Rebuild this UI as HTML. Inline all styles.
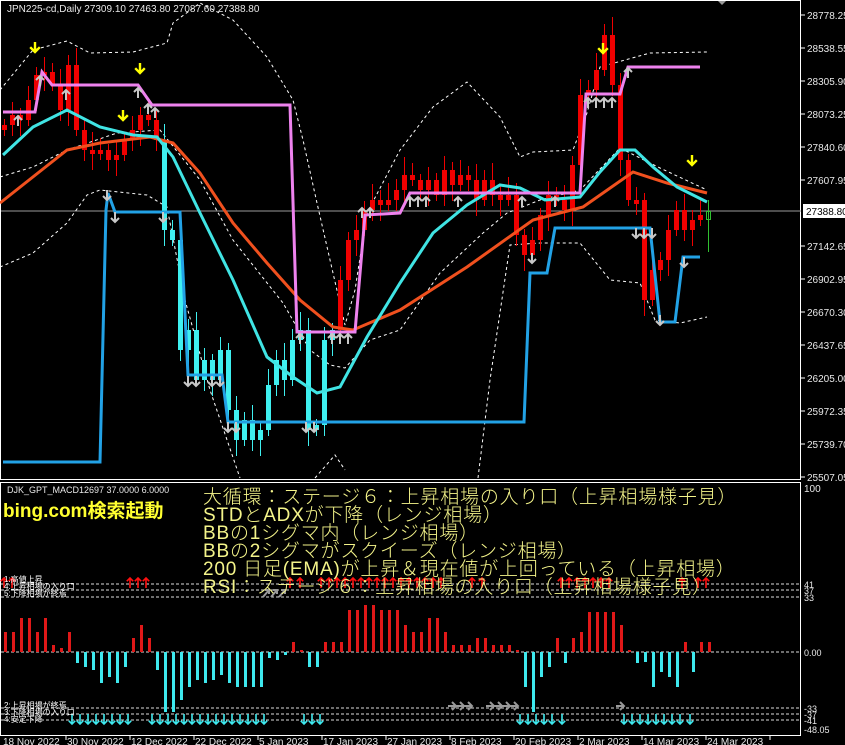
<!DOCTYPE html>
<html><head><meta charset="utf-8">
<style>
html,body{margin:0;padding:0;background:#000;width:845px;height:745px;overflow:hidden}
svg{position:absolute;left:0;top:0}
.t{font-family:"Liberation Sans",sans-serif;fill:#e8e8e8;font-size:10px}
#yt{position:absolute;left:203px;top:489px;color:#f4f48a;font-family:"Liberation Sans","Noto Sans CJK JP",sans-serif;font-size:19px;line-height:18px;letter-spacing:0.8px;white-space:pre;font-weight:300}
#bing{position:absolute;left:3px;top:496px;color:#ffff30;font-family:"Liberation Sans","Noto Sans CJK JP",sans-serif;font-size:19px;font-weight:bold}
</style></head><body>
<svg id="s" width="845" height="745" xmlns="http://www.w3.org/2000/svg"></svg>
<div id="yt">大循環：ステージ６：上昇相場の入り口（上昇相場様子見）
STDとADXが下降（レンジ相場）
BBの1シグマ内（レンジ相場）
BBの2シグマがスクイーズ（レンジ相場）
200 日足(EMA)が上昇＆現在値が上回っている（上昇相場）
RSI：ステージ６：上昇相場の入り口（上昇相場様子見）</div>
<div id="bing">bing.com検索起動</div>
<script>
(function(){
var s=document.getElementById('s'),h='';
function pl(pts,c,w,d){h+='<polyline fill="none" stroke="'+c+'" stroke-width="'+w+'"'+(d?' stroke-dasharray="'+d+'"':'')+' points="'+pts.map(function(p){return p.join(',')}).join(' ')+'"/>';}
function tx(x,y,t,c,sz,a){h+='<text class="t" x="'+x+'" y="'+y+'"'+(c?' style="fill:'+c+(sz?';font-size:'+sz+'px':'')+'"':'')+(a?' text-anchor="'+a+'"':'')+'>'+t+'</text>';}
h+='<rect x="0.5" y="0.5" width="800" height="479" fill="none" stroke="#fff"/>';
h+='<rect x="0.5" y="482.5" width="800" height="253" fill="none" stroke="#fff"/>';
var pv=['28778.25','28538.55','28305.90','28073.25','27840.60','27607.95','','27142.65','26902.95','26670.30','26437.65','26205.00','25972.35','25739.70','25507.05'];
for(var i=0;i<pv.length;i++){var y=15+i*33;if(pv[i]){h+='<line x1="801" x2="805" y1="'+y+'" y2="'+y+'" stroke="#fff"/>';tx(807,y+4,pv[i],'#e8e8e8',10);}}
h+='<line x1="1" x2="801" y1="211" y2="211" stroke="#9a9a9a"/>';
h+='<rect x="803" y="204" width="42" height="14" fill="#fff"/>';tx(806,215,'27388.80','#000',10);
pl([[0,90],[33,50],[67,41],[90,53],[133,52],[167,43],[173,23],[200,3],[233,20],[267,57],[293,100],[303,140],[317,203],[333,273],[345,325],[355,290],[367,213],[400,150],[433,107],[467,82],[500,117],[520,157],[533,152],[573,150],[587,113],[600,67],[650,53],[707,52]],'#fff',1,'3,3');
pl([[0,267],[33,253],[67,223],[87,195],[100,190],[147,195],[167,207],[185,300],[210,390],[240,478]],'#fff',1,'3,3');
pl([[315,478],[335,455],[345,470]],'#fff',1,'3,3');
pl([[478,478],[490,380],[510,245],[540,243],[580,243],[610,280],[640,283],[655,320],[680,323],[707,317]],'#fff',1,'3,3');
pl([[0,177],[33,167],[67,150],[117,133],[160,130],[200,180],[233,240],[283,303],[310,350],[330,365],[345,368],[370,340],[400,330],[440,273],[483,233],[507,213],[540,200],[580,190],[620,148],[660,168],[707,190]],'#fff',1,'3,3');
var C=[125,115,120,100,75,72,85,110,65,130,150,150,150,160,155,140,130,115,120,140,230,240,350,330,380,360,380,350,410,440,420,440,430,385,360,380,340,330,430,425,340,330,280,240,230,210,200,205,200,190,175,180,190,180,195,170,185,175,180,200,180,195,200,195,235,255,240,215,195,200,210,165,95,90,70,35,85,160,200,200,300,270,260,230,210,230,220,215];
var O=130;
for(var i=0;i<C.length;i++){var x=4+8*i,c=C[i],o=O;
 if(Math.abs(c-o)<3)o=c+4;
 var tp=Math.min(o,c),bt=Math.max(o,c);
 var col=(i>=20&&i<=41)?'#3ff0f0':'#f00000';
 var hi=tp-6-(i*7%13),lo=bt+6+(i*5%15);
 h+='<line x1="'+(x+0.5)+'" x2="'+(x+0.5)+'" y1="'+hi+'" y2="'+lo+'" stroke="'+col+'"/>';
 h+='<rect x="'+(x-2)+'" y="'+tp+'" width="5" height="'+(bt-tp)+'" fill="'+col+'"/>';
 O=c;}
var gx=708;h+='<line x1="'+(gx+0.5)+'" x2="'+(gx+0.5)+'" y1="200" y2="252" stroke="#30c030"/><rect x="'+(gx-2)+'.5" y="211.5" width="4" height="8" fill="none" stroke="#30c030"/>';
pl([[0,203],[67,150],[100,143],[150,137],[173,143],[200,173],[233,223],[267,263],[300,300],[333,327],[353,330],[400,310],[467,267],[533,220],[583,207],[633,172],[667,183],[707,193]],'#f0501e',3);
pl([[3,155],[33,127],[67,110],[100,127],[133,135],[157,137],[173,157],[200,213],[233,280],[267,357],[293,377],[317,393],[340,387],[367,337],[400,283],[433,233],[467,205],[500,185],[520,188],[545,200],[580,197],[600,172],[620,150],[635,150],[653,167],[677,187],[707,202]],'#40e4e4',3);
pl([[3,112],[35,112],[42,72],[52,85],[138,85],[152,105],[290,105],[297,332],[355,332],[365,215],[400,213],[410,193],[580,193],[586,94],[620,94],[628,67],[700,67]],'#ee82ee',3);
pl([[3,462],[100,462],[106,210],[108,193],[115,212],[180,212],[188,375],[222,375],[228,422],[524,422],[530,273],[547,273],[555,228],[650,228],[660,322],[675,322],[683,257],[700,257]],'#22a2e6',3);
function up(x,y,c,w){w=w||1;h+='<path d="M'+x+' '+(y+10)+'V'+y+'M'+(x-4*w)+' '+(y+4*w)+'L'+x+' '+y+'L'+(x+4*w)+' '+(y+4*w)+'" stroke="'+c+'" stroke-width="'+(2*w)+'" fill="none"/>';}
function dn(x,y,c,w){w=w||1;h+='<path d="M'+x+' '+(y-10)+'V'+y+'M'+(x-4*w)+' '+(y-4*w)+'L'+x+' '+y+'L'+(x+4*w)+' '+(y-4*w)+'" stroke="'+c+'" stroke-width="'+(2*w)+'" fill="none"/>';}
[[35,52],[140,73],[123,120],[603,53],[692,165]].forEach(function(p){dn(p[0],p[1],'#ffff00',1.2);});
[[18,116],[40,76],[66,90],[138,88],[148,104],[155,108],[300,334],[332,334],[340,334],[348,334],[362,208],[370,208],[410,197],[418,197],[426,197],[458,197],[522,197],[555,197],[588,98],[596,98],[604,98],[612,98],[628,68]].forEach(function(p){up(p[0],p[1],'#c8c8c8');});
[[107,200],[115,222],[163,222],[188,386],[196,386],[212,386],[220,386],[228,432],[236,432],[306,432],[314,432],[532,263],[636,238],[644,238],[652,238],[660,325],[684,267]].forEach(function(p){dn(p[0],p[1],'#c8c8c8');});
tx(7,12,'JPN225-cd,Daily  27309.10 27463.80 27087.60 27388.80','#e8e8e8',10);
h+='<path d="M718 1L722 5L726 1Z" fill="#999"/>';
tx(7,493,'DJK_GPT_MACD12697 37.0000 6.0000','#e8e8e8',9);
[[584,'41'],[590,'37'],[597,'33'],[652,'0.00'],[708,'-33'],[714,'-37'],[720,'-41']].forEach(function(a){h+='<line x1="1" x2="801" y1="'+a[0]+'" y2="'+a[0]+'" stroke="#ddd" stroke-dasharray="3,2"/>';tx(804,a[0]+4,a[1],'#e8e8e8',9);});
tx(804,492,'100','#e8e8e8',10);tx(804,733,'-48.05','#e8e8e8',9);
var HB=[632,632,618,618,632,618,645,648,632,663,667,670,683,677,683,667,638,625,638,670,712,712,700,687,680,683,680,675,683,687,687,687,687,658,660,655,642,650,667,667,642,642,642,610,610,605,605,610,610,610,625,632,632,618,618,632,645,645,645,638,638,645,645,645,650,687,712,677,667,638,663,638,632,612,612,612,612,625,650,663,662,687,672,677,687,642,672,642,642];
for(var i=0;i<HB.length;i++){var x=5+8*i,v=HB[i],neg=v>652;h+='<rect x="'+(x-1)+'" y="'+Math.min(v,652)+'" width="3" height="'+Math.abs(v-652)+'" fill="'+(neg?'#3ee8ee':'#e01818')+'"/>';}
var ra=[4,12,130,138,146,290,300];for(var x=321;x<=447;x+=8)ra.push(x);ra=ra.concat([472,482,561,569,577,585,593,601,609,682,698,706]);
ra.forEach(function(x){up(x,578,'#ff1010',0.8);});
[266,274,282].forEach(function(x){h+='<path d="M'+(x-3)+' 597L'+(x+3)+' 590M'+(x-1)+' 590H'+(x+3)+'V594" stroke="#999" stroke-width="2" fill="none"/>';});
var ca=[];for(var x=72;x<=128;x+=8)ca.push(x);for(var x=152;x<=264;x+=8)ca.push(x);ca=ca.concat([304,312,320,520,528,536,544,552,562]);for(var x=624;x<=680;x+=8)ca.push(x);ca.push(690);
ca.forEach(function(x){dn(x,724,'#3ee8ee',0.8);});
[452,460,468,490,498,506,514,620].forEach(function(x){h+='<path d="M'+(x-4)+' 706H'+(x+4)+'M'+x+' 702L'+(x+4)+' 706L'+x+' 710" stroke="#999" stroke-width="2" fill="none"/>';});
tx(4,582,'1:高値上昇','#fff',8);tx(4,589,'4:上昇相場の入り口','#fff',8);tx(4,596,'5:下降相場が終焉','#fff',8);
tx(4,708,'2:上昇相場が終焉','#fff',8);tx(4,715,'3:下降相場の入り口','#fff',8);tx(4,722,'4:安定下降','#fff',8);
var dl=['18 Nov 2022','30 Nov 2022','12 Dec 2022','22 Dec 2022','5 Jan 2023','17 Jan 2023','27 Jan 2023','8 Feb 2023','20 Feb 2023','2 Mar 2023','14 Mar 2023','24 Mar 2023'];
dl.forEach(function(d,i){var x=3+64*i;h+='<line x1="'+(x+63)+'" x2="'+(x+63)+'" y1="736" y2="740" stroke="#fff"/>';tx(x,745,d,'#e8e8e8',10);});
s.innerHTML=h;
s.querySelectorAll('text').forEach(function(t){t.setAttribute('font-family','Liberation Sans, Noto Sans CJK JP, sans-serif');});
})();
</script>
</body></html>
